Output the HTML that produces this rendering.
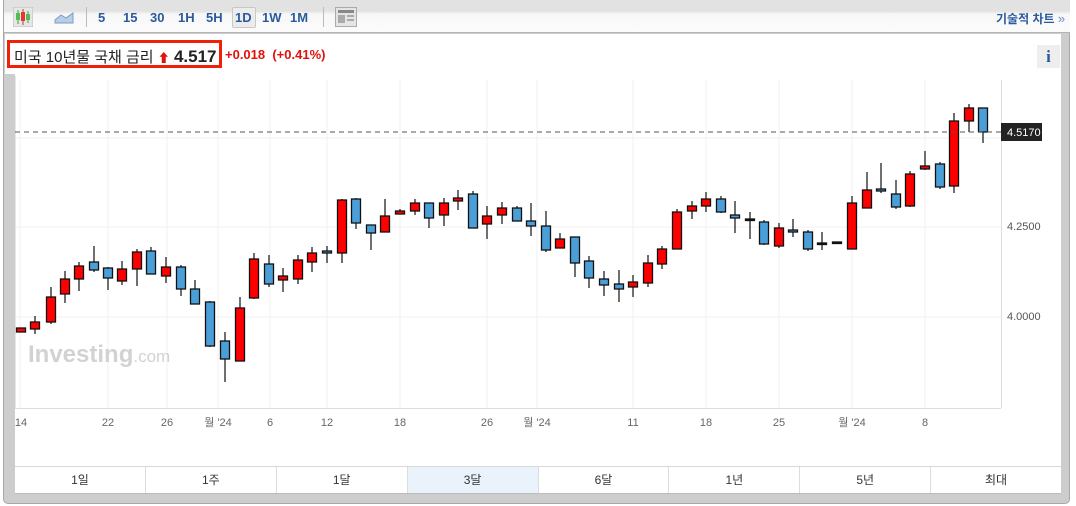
<!DOCTYPE html>
<html><head><meta charset="utf-8"><style>
*{margin:0;padding:0;box-sizing:border-box}
body{width:1076px;height:506px;background:#fff;position:relative;overflow:hidden;font-family:"Liberation Sans","Noto Sans CJK KR",sans-serif}
.frame{position:absolute;left:3px;top:-4px;width:1067px;height:508px;background:#cdcdcd;border:1px solid #a8a8a8;border-radius:5px}
.tb{position:absolute;left:4px;top:0;width:1066px;height:33px;background:linear-gradient(#e2e2e2 0,#e2e2e2 11px,#f7f7f7 14px,#fbfbfb);border-bottom:1px solid #b5b5b5}
.tb span{position:absolute;top:10px;font-size:13px;font-weight:bold;color:#2a5a9e}
.panel{position:absolute;left:15px;top:34px;width:1046px;height:460px;background:#fff}
.hdr{position:absolute;left:5px;top:34px;width:1056px;height:40px;background:#fff}
.box{position:absolute;left:7px;top:40px;width:215px;height:28px;border:3px solid #f0200a}
.rng{position:absolute;left:15px;top:466px;width:1046px;height:28px;display:flex;border-top:1px solid #d8d8d8;border-bottom:1px solid #bcbcbc}
.rng div{flex:1;text-align:center;font-size:12px;line-height:26px;color:#333;border-right:1px solid #ddd}
.rng div:last-child{border-right:none}
</style></head><body>
<div class="frame"></div>
<div class="tb">
<svg style="position:absolute;left:9px;top:7px" width="20" height="20"><rect x="0" y="0" width="20" height="20" fill="#e6e6e6" stroke="#bbb"/><line x1="5" y1="3" x2="5" y2="17" stroke="#3a3"/><rect x="3" y="6" width="4" height="7" fill="#5b5"/><line x1="10" y1="2" x2="10" y2="18" stroke="#c33"/><rect x="8" y="5" width="4" height="9" fill="#e33"/><line x1="15" y1="4" x2="15" y2="16" stroke="#3a3"/><rect x="13" y="7" width="4" height="6" fill="#5b5"/></svg>
<svg style="position:absolute;left:50px;top:10px" width="20" height="14"><path d="M1 10 L7 5 L12 8 L19 3 L19 13 L1 13Z" fill="#b9cde6" stroke="#7c9cc8"/></svg>
<div style="position:absolute;left:82px;top:7px;width:1px;height:20px;background:#bbb"></div>
<span style="left:94px">5</span><span style="left:119px">15</span><span style="left:146px">30</span><span style="left:174px">1H</span><span style="left:202px">5H</span>
<div style="position:absolute;left:228px;top:7px;width:24px;height:21px;border:1px solid #c8c8c8;background:#ececec;border-radius:2px"></div>
<span style="left:231px">1D</span><span style="left:258px">1W</span><span style="left:286px">1M</span>
<div style="position:absolute;left:319px;top:7px;width:1px;height:20px;background:#bbb"></div>
<svg style="position:absolute;left:331px;top:7px" width="22" height="20"><rect x="0.5" y="0.5" width="21" height="19" fill="#e4e4e4" stroke="#aaa"/><rect x="3" y="3" width="16" height="3" fill="#888"/><rect x="3" y="8" width="7" height="8" fill="#aaa"/><rect x="12" y="8" width="7" height="2" fill="#aaa"/><rect x="12" y="12" width="7" height="2" fill="#aaa"/></svg>
<span style="left:992px;font-size:12px;top:10px">기술적 차트 <span style="position:static;color:#6a8cbf;font-weight:normal">»</span></span>
</div>
<div class="panel"></div>
<div class="hdr"></div>
<div class="box"></div>
<div style="position:absolute;left:14px;top:46px;font-size:15px;color:#222;white-space:nowrap">미국 10년물 국채 금리 <span style="color:#e0120a;font-size:12px">&#11014;</span> <b style="font-size:17px;color:#222">4.517</b></div>
<div style="position:absolute;left:225px;top:47px;font-size:13px;font-weight:bold;color:#e0120a;white-space:nowrap">+0.018 &nbsp;(+0.41%)</div>
<div style="position:absolute;left:1037px;top:45px;width:23px;height:23px;background:#eee;color:#2a5a9e;font-weight:bold;font-family:'Liberation Serif',serif;font-size:17px;text-align:center;line-height:23px">i</div>
<svg style="position:absolute;left:0;top:0" width="1076" height="506">
<g stroke="#f2f2f2" stroke-width="1">
<line x1="20" y1="80" x2="20" y2="408"/><line x1="108" y1="80" x2="108" y2="408"/><line x1="167" y1="80" x2="167" y2="408"/><line x1="218" y1="80" x2="218" y2="408"/><line x1="270" y1="80" x2="270" y2="408"/><line x1="327" y1="80" x2="327" y2="408"/><line x1="400" y1="80" x2="400" y2="408"/><line x1="487" y1="80" x2="487" y2="408"/><line x1="537" y1="80" x2="537" y2="408"/><line x1="633" y1="80" x2="633" y2="408"/><line x1="706" y1="80" x2="706" y2="408"/><line x1="779" y1="80" x2="779" y2="408"/><line x1="852" y1="80" x2="852" y2="408"/><line x1="925" y1="80" x2="925" y2="408"/>
<line x1="15" y1="138" x2="1001" y2="138"/><line x1="15" y1="227" x2="1001" y2="227"/><line x1="15" y1="317" x2="1001" y2="317"/>
</g>
<line x1="15" y1="408.5" x2="1001" y2="408.5" stroke="#ddd"/>
<line x1="1001.5" y1="80" x2="1001.5" y2="408" stroke="#ddd"/>
<line x1="15.5" y1="76" x2="15.5" y2="408" stroke="#e6e6e6"/>
<text x="28" y="362" font-size="24" font-weight="bold" fill="#d2d2d2" font-family="Liberation Sans">Investing<tspan font-weight="normal" font-size="17">.com</tspan></text>
<g id="c" stroke="#111" stroke-width="1.3"></g>
<line x1="15" y1="132" x2="1001" y2="132" stroke="#555" stroke-dasharray="5,4"/>
<rect x="1001" y="123" width="41" height="18" fill="#222"/>
<text x="1007" y="136" font-size="11" fill="#fff">4.5170</text>
<g font-size="11" fill="#555">
<text x="1007" y="230">4.2500</text><text x="1007" y="320">4.0000</text>
</g>
<g font-size="11" fill="#666" text-anchor="middle" font-family="Liberation Sans,Noto Sans CJK KR,sans-serif">
<text x="21" y="426">14</text><text x="108" y="426">22</text><text x="167" y="426">26</text><text x="218" y="426">월 '24</text><text x="270" y="426">6</text><text x="327" y="426">12</text><text x="400" y="426">18</text><text x="487" y="426">26</text><text x="537" y="426">월 '24</text><text x="633" y="426">11</text><text x="706" y="426">18</text><text x="779" y="426">25</text><text x="852" y="426">월 '24</text><text x="925" y="426">8</text>
</g>
</svg>
<div class="rng"><div>1일</div><div>1주</div><div>1달</div><div style="background:#eaf2fb">3달</div><div>6달</div><div>1년</div><div>5년</div><div>최대</div></div>
<script>
var d=[[21,328,332,328,332,'r'],[35,322,329,316,334,'r'],[51,297,322,287,324,'r'],[65,279,294,271,303,'r'],[79,266,279,262,291,'r'],[94,262,270,246,272,'b'],[108,268,278,267,290,'b'],[122,269,281,261,285,'r'],[137,252,269,249,286,'r'],[151,251,274,247,274,'b'],[166,267,276,257,283,'r'],[181,267,289,265,296,'b'],[195,289,304,280,304,'b'],[210,302,346,301,347,'b'],[225,341,359,332,382,'b'],[240,308,361,297,361,'r'],[254,259,298,253,299,'r'],[269,264,284,255,287,'b'],[283,276,280,268,292,'r'],[298,260,279,255,284,'r'],[312,253,262,247,272,'r'],[327,251,253,246,263,'b'],[342,200,253,199,263,'r'],[356,199,223,198,229,'b'],[371,225,233,225,250,'b'],[385,216,232,199,232,'r'],[400,211,214,209,214,'r'],[415,203,211,199,215,'r'],[429,203,218,203,228,'b'],[444,203,215,198,226,'r'],[458,198,201,190,210,'r'],[473,194,228,191,228,'b'],[487,216,224,206,239,'r'],[502,208,215,202,224,'r'],[517,208,221,206,221,'b'],[531,221,226,203,236,'b'],[546,226,250,211,252,'b'],[560,239,248,233,248,'r'],[575,237,263,237,277,'b'],[589,261,278,256,288,'b'],[604,279,285,271,296,'b'],[619,284,289,270,302,'b'],[633,282,287,275,297,'r'],[648,263,283,255,287,'r'],[662,249,264,246,269,'r'],[677,212,249,209,249,'r'],[692,206,211,201,219,'r'],[706,199,206,192,212,'r'],[721,199,212,196,213,'b'],[735,215,218,201,233,'b'],[750,219,220,212,239,'k'],[764,222,244,220,245,'b'],[779,228,246,223,248,'r'],[793,230,232,219,237,'b'],[808,232,249,230,251,'b'],[822,243,243,232,250,'k'],[837,242,242,242,242,'k'],[852,203,249,196,249,'r'],[867,190,208,172,208,'r'],[881,189,191,163,193,'b'],[896,194,207,180,209,'b'],[910,174,206,171,207,'r'],[925,166,169,151,170,'r'],[940,164,187,162,189,'b'],[954,121,186,113,193,'r'],[969,108,121,104,132,'r'],[983,108,132,108,143,'b']];
var s='';
d.forEach(function(c){var x=c[0],col=c[5]=='r'?'#f00':c[5]=='b'?'#4a9fd8':'#111';
s+='<line x1="'+x+'" y1="'+c[3]+'" x2="'+x+'" y2="'+c[4]+'" stroke="#222"/>';
var h=Math.max(c[2]-c[1],1.5);
s+='<rect x="'+(x-4.5)+'" y="'+c[1]+'" width="9" height="'+h+'" fill="'+col+'"/>';});
document.getElementById('c').innerHTML=s;
</script>
</body></html>
